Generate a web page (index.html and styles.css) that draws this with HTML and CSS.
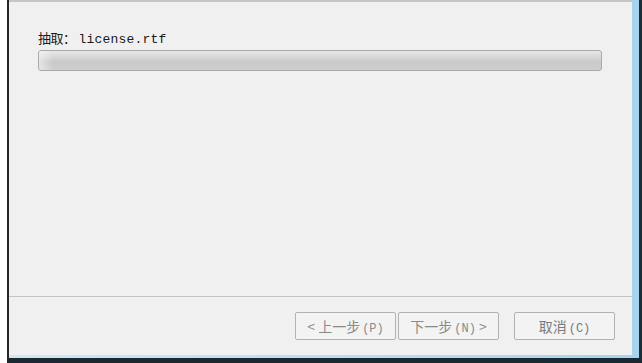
FILE: index.html
```html
<!DOCTYPE html>
<html lang="zh-CN">
<head>
    <meta charset="UTF-8">
    <meta name="viewport" content="width=device-width, initial-scale=1.0">
    <title>安装</title>
    <link rel="stylesheet" href="styles.css">
</head>
<body>
    <div class="frame">
        <div class="chrome">
            <div class="dialog">
                <div class="main">
                    <p class="status"><span class="cjk">抽取：</span><span class="file">license.rtf</span></p>
                    <div class="progress"><div class="progress-fill"></div></div>
                </div>
                <div class="footer">
                    <button class="btn" disabled>&lt; 上一步<span class="key">(P)</span></button>
                    <button class="btn btn-next" disabled>下一步<span class="key">(N)</span> &gt;</button>
                    <button class="btn btn-cancel">取消<span class="key">(C)</span></button>
                </div>
            </div>
        </div>
    </div>
</body>
</html>
```

FILE: styles.css
```css
html, body {
    margin: 0;
    padding: 0;
}
body {
    background: #ffffff;
    font-family: "Noto Sans CJK SC", "DejaVu Sans", sans-serif;
    width: 642px;
    height: 363px;
    overflow: hidden;
}
.frame {
    margin-left: 7px;
    width: 630px;
    height: 358px;
    border-left: 2px solid #262626;
    border-right: 3px solid #1d2d38;
    border-bottom: 5px solid #1b2731;
}
.chrome {
    height: 100%;
    padding-right: 7px;
    padding-bottom: 3px;
    box-sizing: border-box;
    background: linear-gradient(to right, #cfe8f5, #a6d4ee);
}
.dialog {
    height: 100%;
    box-sizing: border-box;
    background: #f0f0f0;
    border-top: 2px solid #c6c6c6;
    display: flex;
    flex-direction: column;
}
.main {
    height: 294px;
    padding: 28px 30px 0 29px;
    box-sizing: border-box;
}
.status {
    margin: 0 0 5px 0;
    height: 15px;
    line-height: 15px;
    font-size: 13px;
    color: #1a1a1a;
    white-space: nowrap;
}
.cjk {
    font-family: "Noto Sans CJK SC", sans-serif;
    letter-spacing: -0.5px;
}
.file {
    font-family: "Liberation Mono", "DejaVu Sans Mono", monospace;
    font-size: 13px;
    margin-left: 3px;
    letter-spacing: 0.2px;
}
.progress {
    height: 21px;
    box-sizing: border-box;
    border: 1px solid #a9a9a9;
    border-radius: 3px;
    background: linear-gradient(to bottom, #e6e6e6 0%, #d6d6d6 35%, #c9c9c9 55%, #cfcfcf 100%);
    overflow: hidden;
}
.progress-fill {
    width: 14px;
    height: 100%;
    background: linear-gradient(to right, rgba(255,255,255,0.5), rgba(255,255,255,0));
}
.footer {
    flex: 1;
    border-top: 1px solid #c3c3c3;
    display: flex;
    justify-content: flex-end;
    align-items: flex-start;
    padding: 15px 17px 0 0;
}
.btn {
    width: 101px;
    height: 28px;
    margin: 0;
    padding: 0;
    border: 1px solid #b2b2b2;
    border-radius: 2px;
    background: #f3f3f3;
    color: #8a8a8a;
    font-family: "Noto Sans CJK SC", sans-serif;
    font-size: 14px;
    line-height: 26px;
    text-align: center;
    white-space: nowrap;
    cursor: default;
}
.btn-next {
    margin-left: 2px;
}
.btn-cancel {
    margin-left: 15px;
    color: #7a7a7a;
}
.key {
    font-family: "Liberation Mono", "DejaVu Sans Mono", monospace;
    font-size: 12px;
    margin-left: 2px;
}
```
